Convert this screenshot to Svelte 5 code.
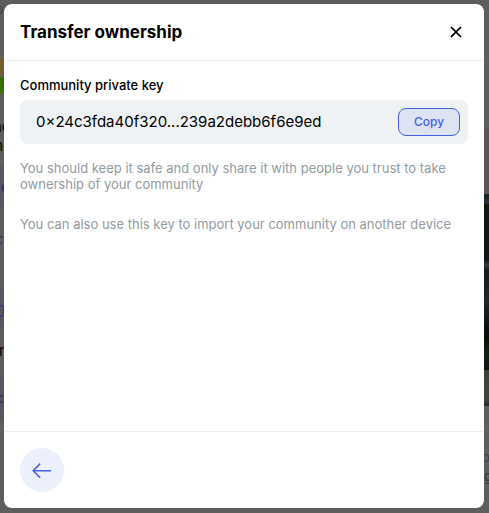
<script>
  const fragments = [
    { text: 'or', x: -5, y: 0, size: 14, color: '#3c3f43' },
    { text: 'ne', x: -7, y: 118, size: 15, color: '#050505' },
    { text: 'm', x: -10, y: 137, size: 15, color: '#050505' },
    { text: 'e', x: 1, y: 178, size: 13, color: '#232d63' },
    { text: 'c', x: -4, y: 230, size: 13, color: '#232d63' },
    { text: 'r', x: -1, y: 342, size: 15, color: '#050505' },
    { text: 'c', x: -4, y: 389, size: 13, color: '#232d63' },
    { text: 'or', x: 482, y: 448, size: 13, color: '#3c3f43' },
    { text: 'g', x: 484, y: 467, size: 13, color: '#303338' }
  ];
  const privateKey = '0×24c3fda40f320...239a2debb6f6e9ed';
</script>

<main>
  <div class="backdrop" aria-hidden="true">
    <i class="logo amber"></i>
    <i class="logo green"></i>
    <i class="tint one"></i>
    <i class="tint two"></i>
    <i class="tint three"></i>
    <i class="chip"></i>
    <i class="rose"></i>
    <i class="photo"></i>
    <i class="photo-base"></i>
    {#each fragments as f}
      <span style="left:{f.x}px;top:{f.y}px;font-size:{f.size}px;color:{f.color}">{f.text}</span>
    {/each}
  </div>

  <section class="dialog" role="dialog" aria-label="Transfer ownership">
    <header>
      <h1>Transfer ownership</h1>
      <button class="close" aria-label="Close">
        <svg width="24" height="24" viewBox="0 0 24 24"><path d="M7.1 7.1l9.8 9.8M16.9 7.1l-9.8 9.8" fill="none" stroke="#000" stroke-width="1.7" /></svg>
      </button>
    </header>
    <div class="body">
      <div class="label">Community private key</div>
      <div class="field">
        <span>{privateKey}</span>
        <button class="copy">Copy</button>
      </div>
      <p>You should keep it safe and only share it with people you trust to take ownership of your community</p>
      <p class="second">You can also use this key to import your community on another device</p>
    </div>
    <footer>
      <button class="back" aria-label="Back">
        <svg width="24" height="24" viewBox="0 0 24 24"><path d="M21 12.7H3.6M10.2 5.6L3.2 12.7l7 7" fill="none" stroke="#4360df" stroke-width="1.5" /></svg>
      </button>
    </footer>
  </section>
</main>

<style>
  :global(body) { margin: 0; overflow: hidden; }
  main {
    position: relative;
    box-sizing: border-box;
    width: 489px;
    height: 513px;
    padding: 4px 5px 5px 4px;
    overflow: hidden;
    background: #5e5e5e;
    font-family: Inter, "Liberation Sans", sans-serif;
  }
  .backdrop { position: absolute; inset: 0; overflow: hidden; }
  .backdrop span { position: absolute; line-height: 18px; }
  .backdrop i { position: absolute; }
  .logo { left: -18px; width: 23px; height: 21px; }
  .amber { top: 54px; background: #765e2c; border-radius: 0 14px 0 0; }
  .green { top: 77px; background: #367000; border-radius: 0 4px 14px 0; }
  .tint { left: 0; width: 8px; background: #55565e; }
  .one { top: 165px; height: 44px; }
  .two { top: 287px; height: 40px; }
  .three { top: 376px; height: 44px; }
  .chip {
    left: -8px; top: 305px; width: 10px; height: 10px;
    border: 1px solid #283776; border-radius: 3px;
  }
  .rose { left: 482px; top: 128px; width: 10px; height: 67px; background: #5e5354; }
  .photo {
    left: 482px; top: 194px; width: 10px; height: 182px;
    background: linear-gradient(#1b261f 0 5px, #292f3b 6px 9px, #131617 11px 66px, #333a40 71px, #15191b 76px, #22262b 105px, #080b09 140px, #12200f 160px, #0c100b);
  }
  .photo-base { left: 482px; top: 370px; width: 10px; height: 36px; background: linear-gradient(#3d3d3b, #444441 80%, #252725); }
  .dialog {
    position: relative;
    display: flex;
    flex-direction: column;
    height: 504px;
    border-radius: 8px;
    background: #fff;
    overflow: hidden;
  }
  header {
    display: flex;
    align-items: center;
    justify-content: space-between;
    box-sizing: border-box;
    height: 57px;
    padding: 0 16.5px 1px 16px;
    border-bottom: 1px solid #eceef0;
  }
  h1 { margin: 0; font-size: 17px; line-height: 24px; font-weight: 700; color: #000; }
  button { padding: 0; border: 0; font: inherit; }
  .close { display: flex; background: none; }
  .body { flex: 1; padding: 16px 16px 0; }
  .label { font-size: 13px; line-height: 16px; font-weight: 500; color: #000; }
  .field {
    display: flex;
    align-items: center;
    justify-content: space-between;
    box-sizing: border-box;
    height: 44px;
    margin-top: 7px;
    padding: 0 8px 0 16px;
    border-radius: 8px;
    background: #eef2f5;
    font-size: 15px;
    color: #000;
  }
  .field span { padding-bottom: 2px; }
  .copy {
    box-sizing: border-box;
    width: 62px;
    height: 28px;
    padding-bottom: 2px;
    border: 1px solid #4360df;
    border-radius: 8px;
    background: #dde3f3;
    color: #4360df;
    font-size: 12px;
    font-weight: 500;
  }
  p { margin: 16px 0 0; font-size: 13px; line-height: 16px; color: #939ba1; }
  .second { margin-top: 24px; }
  footer {
    display: flex;
    align-items: center;
    box-sizing: border-box;
    height: 77px;
    padding: 0 16px;
    border-top: 1px solid #eceef0;
  }
  .back {
    display: flex;
    align-items: center;
    justify-content: center;
    width: 44px;
    height: 44px;
    border-radius: 50%;
    background: #eceffc;
  }
</style>
